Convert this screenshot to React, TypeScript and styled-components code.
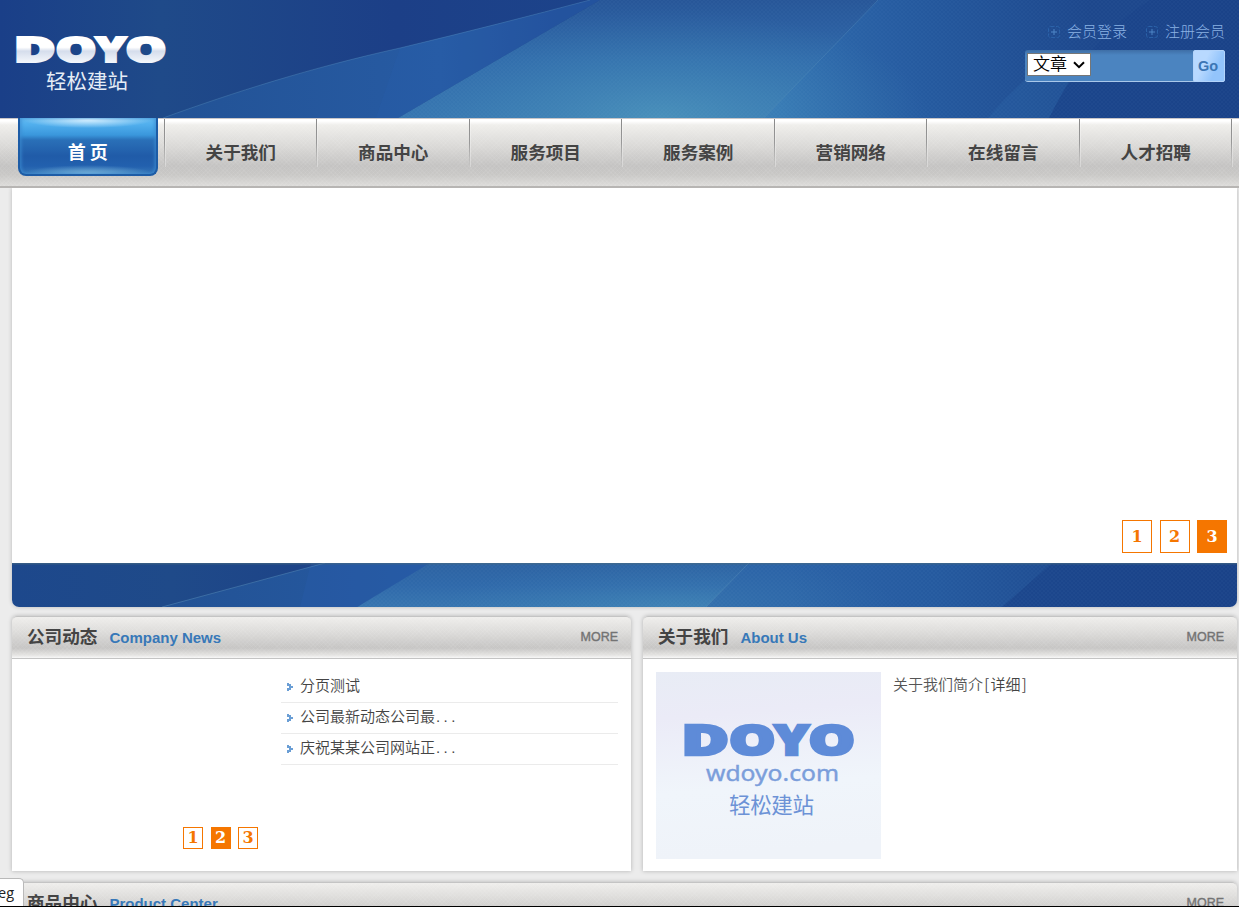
import React from 'react';
import styled, { createGlobalStyle, css } from 'styled-components';

const cjk = '"Noto Sans CJK SC", sans-serif';

const mesh = css`
  repeating-linear-gradient(45deg, rgba(255, 255, 255, 0.05) 0 1px, transparent 1px 3px),
  repeating-linear-gradient(-45deg, rgba(255, 255, 255, 0.05) 0 1px, transparent 1px 3px)
`;

const GlobalStyle = createGlobalStyle`
  * { box-sizing: border-box; }
  html, body { margin: 0; padding: 0; overflow: hidden; }
  body { background: #ececec; font-family: "Liberation Sans", ${cjk}; color: #555; }
  a { color: inherit; text-decoration: none; }
  ul { list-style: none; margin: 0; padding: 0; }
  h2 { margin: 0; }
`;

const Page = styled.div`
  position: relative;
  width: 1239px;
  height: 907px;
  overflow: hidden;
  border-bottom: 1px solid #000;
  background: #ececec;
`;

const Header = styled.header`
  position: relative;
  height: 118px;
  display: flex;
  justify-content: space-between;
  background: #1d4389;
`;

const Backdrop = styled.svg`
  position: absolute;
  inset: 0;
  width: 100%;
  height: 100%;
  display: block;
`;

const LogoLink = styled.a`
  position: relative;
  margin: 28px 0 0 10px;
  height: 70px;
`;

const HeaderTools = styled.div`
  position: relative;
  display: flex;
  flex-direction: column;
  align-items: flex-end;
  padding: 19px 14px 0 0;
`;

const MemberLinks = styled.div`
  display: flex;
  gap: 19px;
  height: 23px;
  margin-bottom: 8px;
`;

const MemberLink = styled.a`
  display: flex;
  align-items: center;
  gap: 7px;
  font: 300 15px/23px ${cjk};
  color: #8ab2e4;
  svg { margin-top: 3px; }
`;

const SearchBar = styled.form`
  display: flex;
  width: 200px;
  height: 32px;
  border-radius: 3px;
  background: linear-gradient(#3e6ea6, #4b84c0 5px);
  border-bottom: 1px solid #a9c8ea;
`;

const TypeSelect = styled.button`
  display: flex;
  align-items: center;
  justify-content: space-between;
  width: 64px;
  height: 23px;
  margin: 3px 0 0 2px;
  padding: 0 5px 3px;
  border: 1px solid #767676;
  background: #fff;
  color: #000;
  font: 350 17px/18px ${cjk};
  svg { margin-top: 3px; }
`;

const SearchInput = styled.input`
  flex: 1;
  min-width: 0;
  border: 0;
  background: transparent;
`;

const GoButton = styled.button`
  width: 32px;
  height: 32px;
  padding: 0 2px 0 0;
  border: 1px solid #b3d4fb;
  border-radius: 2px;
  background: linear-gradient(115deg, #b8d9ff 35%, #93c4fb 70%);
  color: #3c76b5;
  font: bold 14.5px "Liberation Sans", sans-serif;
`;

const Nav = styled.nav`
  position: relative;
  display: flex;
  height: 70px;
  padding-left: 12px;
  border-top: 1px solid #c9c6c8;
  border-bottom: 2px solid #b7b5b3;
  background: ${mesh},
    linear-gradient(#fff 0 2px, #efeeeb 6px, #d9d8d6 28px, #c4c3c2 47px, #c9c8c6 56px, #dbdad8 66px);
`;

const NavItem = styled.a`
  position: relative;
  flex: 0 0 152.5px;
  display: flex;
  justify-content: center;
  font: bold 17.6px/65px ${cjk};
  color: #444;
  &::after {
    content: '';
    position: absolute;
    right: 0;
    top: 0;
    width: 1px;
    height: 48px;
    background: linear-gradient(#888, #999 50%, transparent);
    box-shadow: 1px 0 rgba(255, 255, 255, 0.3);
  }
`;

const ActiveTab = styled.span`
  width: 140px;
  height: 58px;
  margin-top: -1px;
  margin-right: 1px;
  text-align: center;
  font-size: 18px;
  line-height: 67px;
  color: #fff;
  border: 2px solid #1d5ca6;
  border-top: 0;
  border-radius: 0 0 8px 8px;
  box-shadow: inset 2px 0 3px rgba(60, 140, 210, 0.6), inset -2px 0 3px rgba(60, 140, 210, 0.6);
  background: radial-gradient(ellipse 64px 8px at 50% 2px, #d5efff, transparent),
    radial-gradient(ellipse 66px 9px at 50% 100%, #78b5dc, transparent),
    linear-gradient(#63b8ef, #52b0ee 6px, #3a97dc 17px, #2a70b8 22px, #205ba8 38px, #2260ae 48px, #3678ba);
`;

const Main = styled.main`
  width: 1226px;
  margin-left: 12px;
`;

const Banner = styled.section`
  display: flex;
  flex-direction: column;
  width: 1225px;
  height: 419px;
  background: #fff;
  border-radius: 0 0 7px 7px;
  box-shadow: 0 0 4px rgba(0, 0, 0, 0.22);
`;

const BannerStage = styled.div`
  flex: 1;
  display: flex;
  align-items: flex-end;
  justify-content: flex-end;
  padding: 0 10px 10px 0;
`;

const BannerStrip = styled.div`
  position: relative;
  height: 44px;
  border-radius: 0 0 7px 7px;
  overflow: hidden;
`;

const Pager = styled.div`
  display: flex;
  gap: 7.5px;
`;

const PageButton = styled.a<{ $large?: boolean; $current?: boolean }>`
  display: block;
  width: ${(p) => (p.$large ? 30 : 20)}px;
  height: ${(p) => (p.$large ? 33 : 22)}px;
  border: 1px solid #f57600;
  background: ${(p) => (p.$current ? '#f57600' : '#fff')};
  color: ${(p) => (p.$current ? '#fff' : '#f57600')};
  font: bold 16px/${(p) => (p.$large ? 32 : 20)}px "DejaVu Serif", serif;
  text-align: center;
`;

const PanelRow = styled.div<{ $gap?: number }>`
  display: flex;
  gap: 12px;
  margin-top: ${(p) => p.$gap ?? 9}px;
`;

const Panel = styled.section<{ $width: number; $height: number }>`
  width: ${(p) => p.$width}px;
  height: ${(p) => p.$height}px;
  flex: none;
  background: #fff;
  border-radius: 5px 5px 0 0;
  box-shadow: 0 0 4px rgba(0, 0, 0, 0.25);
`;

const PanelHead = styled.div`
  display: flex;
  align-items: center;
  height: 43px;
  padding: 0 13px 2px 15px;
  border: 1px solid #c4c4c4;
  border-width: 1px 0;
  border-radius: 5px 5px 0 0;
  background: ${mesh}, linear-gradient(#efeeec, #dedddb 14px, #c6c5c4 31px, #e4e3e1 38px, #f7f7f7 41px);
`;

const PanelTitle = styled.h2`
  font: bold 17.6px/38px ${cjk};
  margin-top: -1px;
  color: #444;
`;

const PanelSubtitle = styled.span`
  flex: 1;
  margin: 2px 0 0 12px;
  font: bold 15px "Liberation Sans", sans-serif;
  color: #3778b8;
`;

const More = styled.a`
  margin-top: 1px;
  font: 12.5px "Liberation Sans", sans-serif;
  color: #707070;
  -webkit-text-stroke: 0.4px #777;
`;

const NewsBody = styled.div`
  display: grid;
  grid-template-columns: 246px 337px;
  column-gap: 23px;
  height: 212px;
  padding-top: 13px;
`;

const NewsSlide = styled.div`
  display: flex;
  align-items: flex-end;
  justify-content: flex-end;
  padding-bottom: 22px;
`;

const NewsItem = styled.li`
  display: flex;
  align-items: center;
  gap: 7px;
  height: 31px;
  padding-left: 6px;
  border-bottom: 1px solid #ebebeb;
  font: 350 15px/28px ${cjk};
  color: #444;
  a { margin-top: -4px; }
`;

const Dots = styled.span`
  font-family: "Liberation Sans", sans-serif;
  letter-spacing: 3.4px;
  margin-left: 1px;
`;

const Bracket = styled.span`
  display: inline-block;
  width: 7.5px;
  text-align: center;
`;

const AboutBody = styled.div`
  display: flex;
  gap: 12px;
  padding: 13px;
`;

const AboutText = styled.p`
  margin: 1px 0 0;
  font: 350 15px/22px ${cjk};
  color: #555;
  a { color: #444; }
`;

const StatusBubble = styled.div`
  position: absolute;
  left: -1px;
  bottom: 0;
  width: 25px;
  height: 28px;
  border: 1px solid #b9b9b9;
  border-bottom: 0;
  border-radius: 0 5px 0 0;
  background: #fff;
  color: #222;
  font: 14.5px/28px "Open Sans", sans-serif;
  direction: rtl;
  padding-right: 9px;
  white-space: nowrap;
`;

function Rays({ id, strip }: { id: string; strip?: boolean }) {
  const w = strip ? 1225 : 1239;
  const h = strip ? 44 : 118;
  return (
    <Backdrop viewBox={`0 0 ${w} ${h}`} preserveAspectRatio="none">
      <defs>
        <linearGradient id={`${id}-base`}>
          <stop offset="0" stopColor={strip ? '#1d488c' : '#1a3f88'} />
          <stop offset=".13" stopColor="#1f4a89" />
          <stop offset=".32" stopColor="#1c3f87" />
          <stop offset=".7" stopColor="#1d4a90" />
          <stop offset="1" stopColor="#1a4288" />
        </linearGradient>
        <linearGradient id={`${id}-a`} gradientUnits="userSpaceOnUse" x1="160" y1="0" x2="560" y2="0">
          <stop offset="0" stopColor="#225295" />
          <stop offset=".7" stopColor="#275ba3" />
          <stop offset="1" stopColor="#224f99" />
        </linearGradient>
        <linearGradient id={`${id}-b`} gradientUnits="userSpaceOnUse" x1="0" y1="0" x2="0" y2={h}>
          <stop offset="0" stopColor={strip ? '#2d63a2' : '#275698'} />
          <stop offset=".5" stopColor="#2f69aa" />
          <stop offset="1" stopColor="#3775b0" />
        </linearGradient>
        <linearGradient id={`${id}-c`} gradientUnits="userSpaceOnUse" x1="780" y1={h} x2="1100" y2={h / 2}>
          <stop offset="0" stopColor={strip ? '#2b63a7' : '#306eb0'} />
          <stop offset=".45" stopColor="#255a9f" />
          <stop offset="1" stopColor="#1d478c" />
        </linearGradient>
        <radialGradient id={`${id}-g`} gradientUnits="userSpaceOnUse" cx="0" cy="0" r="1" gradientTransform={`translate(660 ${h}) scale(${strip ? 230 : 270} ${strip ? 50 : 110})`}>
          <stop offset="0" stopColor="#62b5c8" stopOpacity={strip ? 0.2 : 0.42} />
          <stop offset="1" stopColor="#4a9cc0" stopOpacity="0" />
        </radialGradient>
        <pattern id={`${id}-dots`} width="4" height="4" patternUnits="userSpaceOnUse">
          <path d="M0 0l4 4M4 0L0 4" stroke="#a7d8ef" strokeOpacity=".05" strokeWidth=".6" />
        </pattern>
      </defs>
      <rect width={w} height={h} fill={`url(#${id}-base)`} />
      {strip ? (
        <>
          <path d="M150 44L313 0H420L345 44z" fill={`url(#${id}-a)`} />
          <path d="M288 44L299 0H420L345 44z" fill="#295dab" opacity=".35" />
          <path d="M345 44L418 0H737L694 44z" fill={`url(#${id}-b)`} />
          <path d="M694 44L737 0H1040L990 44z" fill={`url(#${id}-c)`} />
          <path d="M150 44L313 0M694 44L737 0" stroke="#6fa9cb" strokeOpacity=".35" fill="none" />
          <path d="M345 44L418 0H990V44H345z" fill={`url(#${id}-g)`} />
          <path d="M345 44L418 0H1225V44z" fill={`url(#${id}-dots)`} />
        </>
      ) : (
        <>
          <path d="M163 118C235 92 310 68 400 48Q500 24 590 0H600L398 118z" fill={`url(#${id}-a)`} />
          <path d="M400 48L376 118H398L600 0H590Q500 24 400 48z" fill="#2a60b0" opacity=".24" />
          <path d="M398 118L600 0H878L764 118z" fill={`url(#${id}-b)`} />
          <path d="M764 118L878 0H1150C1110 25 1080 58 1049 118z" fill={`url(#${id}-c)`} />
          <path d="M988 118C1020 80 1050 55 1090 50Q1070 76 1049 118z" fill="#3274b6" opacity=".2" />
          <path d="M163 118C235 92 310 68 400 48Q500 24 590 0M764 118L878 0" stroke="#67a3cb" strokeOpacity=".3" fill="none" />
          <path d="M398 118L600 0H1000V118z" fill={`url(#${id}-g)`} />
          <path d="M398 118L600 0H1239V118z" fill={`url(#${id}-dots)`} />
        </>
      )}
      <rect width={w} height="1.5" fill="#496b82" opacity={strip ? 0.55 : 0} />
    </Backdrop>
  );
}

const wordmark = [
  { ch: 'D', x: -2.2, stretch: 1.63 },
  { ch: 'O', x: 39.6, stretch: 1.47 },
  { ch: 'Y', x: 79.6, stretch: 1.32 },
  { ch: 'O', x: 109.6, stretch: 1.47 },
];

function Wordmark({ x, y, sx = 1, sy = 1, fill }: { x: number; y: number; sx?: number; sy?: number; fill: string }) {
  return (
    <g transform={`translate(${x} ${y}) scale(${sx} ${sy})`} fill={fill} stroke={fill} strokeWidth="2.2" fontFamily="Open Sans" fontWeight="800" fontSize="35">
      {wordmark.map((l, i) => (
        <text key={i} transform={`translate(${l.x} 0) scale(${l.stretch} 1)`}>{l.ch}</text>
      ))}
    </g>
  );
}

function PlusIcon() {
  return (
    <svg width="12" height="12" viewBox="0 0 12 12" fill="none">
      <rect x=".5" y=".5" width="11" height="11" rx="2" stroke="#2b62a9" strokeDasharray="4 1.5" />
      <path d="M6 3v6M3 6h6" stroke="#4e86c6" />
    </svg>
  );
}

function Bullet() {
  return (
    <svg width="6" height="8" viewBox="0 0 6 8">
      <path d="M0 0h2v1h2v2h2v2H4v2H2v1H0V5h2V3H0z" fill="#5a93d0" opacity=".9" />
    </svg>
  );
}

const pages = [1, 2, 3];

function PagerLinks({ current, large }: { current: number; large?: boolean }) {
  return (
    <Pager>
      {pages.map((n) => (
        <PageButton key={n} href="#" $large={large} $current={n === current}>{n}</PageButton>
      ))}
    </Pager>
  );
}

function PanelHeading({ title, subtitle }: { title: string; subtitle: string }) {
  return (
    <PanelHead>
      <PanelTitle>{title}</PanelTitle>
      <PanelSubtitle>{subtitle}</PanelSubtitle>
      <More href="#">MORE</More>
    </PanelHead>
  );
}

const navItems = ['关于我们', '商品中心', '服务项目', '服务案例', '营销网络', '在线留言', '人才招聘'];
const news = [
  { text: '分页测试', cut: false },
  { text: '公司最新动态公司最', cut: true },
  { text: '庆祝某某公司网站正', cut: true },
];

export default function App() {
  return (
    <>
      <GlobalStyle />
      <Page>
        <Header>
          <Rays id="head" />
          <LogoLink href="#">
            <svg width="170" height="70" viewBox="0 0 170 70">
              <defs>
                <linearGradient id="silver" gradientUnits="userSpaceOnUse" x1="0" y1="-26" x2="0" y2="1">
                  <stop offset="0" stopColor="#fff" />
                  <stop offset=".42" stopColor="#fff" />
                  <stop offset=".56" stopColor="#d5ddec" />
                  <stop offset="1" stopColor="#f5f8fc" />
                </linearGradient>
              </defs>
              <Wordmark x={6} y={34} fill="url(#silver)" />
              <text x="36" y="61" textLength="82" fontFamily="Noto Sans CJK SC" fontSize="20.5" fill="#e6edf6">轻松建站</text>
            </svg>
          </LogoLink>
          <HeaderTools>
            <MemberLinks>
              <MemberLink href="#"><PlusIcon />会员登录</MemberLink>
              <MemberLink href="#"><PlusIcon />注册会员</MemberLink>
            </MemberLinks>
            <SearchBar>
              <TypeSelect type="button">
                文章
                <svg width="12" height="8" viewBox="0 0 12 8" fill="none">
                  <path d="M1 1.2l5 5 5-5" stroke="#000" strokeWidth="2" />
                </svg>
              </TypeSelect>
              <SearchInput />
              <GoButton type="button">Go</GoButton>
            </SearchBar>
          </HeaderTools>
        </Header>
        <Nav>
          <NavItem href="#"><ActiveTab>首 页</ActiveTab></NavItem>
          {navItems.map((t) => <NavItem key={t} href="#">{t}</NavItem>)}
        </Nav>
        <Main>
          <Banner>
            <BannerStage><PagerLinks large current={3} /></BannerStage>
            <BannerStrip><Rays id="strip" strip /></BannerStrip>
          </Banner>
          <PanelRow>
            <Panel $width={619} $height={255}>
              <PanelHeading title="公司动态" subtitle="Company News" />
              <NewsBody>
                <NewsSlide><PagerLinks current={2} /></NewsSlide>
                <ul>
                  {news.map((n) => (
                    <NewsItem key={n.text}>
                      <Bullet />
                      <a href="#">{n.text}{n.cut && <Dots>...</Dots>}</a>
                    </NewsItem>
                  ))}
                </ul>
              </NewsBody>
            </Panel>
            <Panel $width={594} $height={255}>
              <PanelHeading title="关于我们" subtitle="About Us" />
              <AboutBody>
                <svg width="225" height="187" viewBox="0 0 225 187">
                  <defs>
                    <linearGradient id="mist" x1="0" y1="0" x2=".1" y2="1">
                      <stop offset="0" stopColor="#e8ecf5" />
                      <stop offset=".25" stopColor="#ebebf7" />
                      <stop offset=".65" stopColor="#f0f5fb" />
                      <stop offset="1" stopColor="#eff3f9" />
                    </linearGradient>
                  </defs>
                  <rect width="225" height="187" fill="url(#mist)" />
                  <Wordmark x={28} y={82.5} sx={1.135} sy={1.2} fill="#5e8bd8" />
                  <text x="50" y="109" textLength="133" lengthAdjust="spacingAndGlyphs" fontFamily="Noto Sans" fontSize="22" fill="#7b9edb" stroke="#7b9edb" strokeWidth=".4">wdoyo.com</text>
                  <text x="73" y="141" textLength="85" fontFamily="Noto Sans CJK SC" fontSize="21.5" fill="#6c92d6">轻松建站</text>
                </svg>
                <AboutText>关于我们简介<a href="#"><Bracket>[</Bracket>详细<Bracket>]</Bracket></a></AboutText>
              </AboutBody>
            </Panel>
          </PanelRow>
          <PanelRow $gap={11}>
            <Panel $width={1225} $height={60}>
              <PanelHeading title="商品中心" subtitle="Product Center" />
            </Panel>
          </PanelRow>
        </Main>
        <StatusBubble>eg</StatusBubble>
      </Page>
    </>
  );
}
